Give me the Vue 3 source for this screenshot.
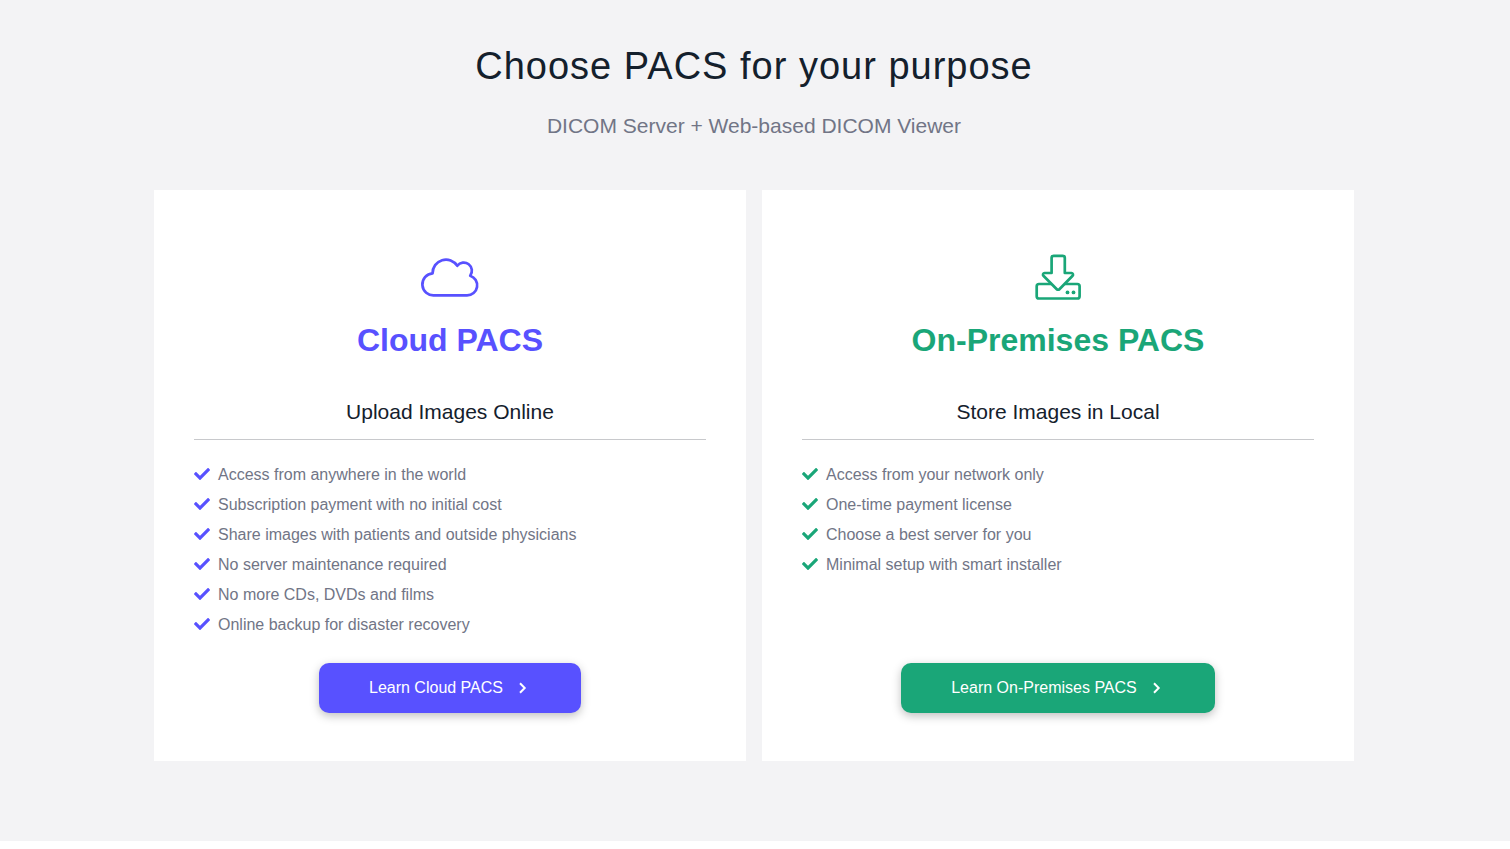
<script setup>
const plans = [
  {
    id: 'cloud',
    title: 'Cloud PACS',
    tagline: 'Upload Images Online',
    action: 'Learn Cloud PACS',
    features: [
      'Access from anywhere in the world',
      'Subscription payment with no initial cost',
      'Share images with patients and outside physicians',
      'No server maintenance required',
      'No more CDs, DVDs and films',
      'Online backup for disaster recovery',
    ],
  },
  {
    id: 'premises',
    title: 'On-Premises PACS',
    tagline: 'Store Images in Local',
    action: 'Learn On-Premises PACS',
    features: [
      'Access from your network only',
      'One-time payment license',
      'Choose a best server for you',
      'Minimal setup with smart installer',
    ],
  },
]
</script>

<template>
  <main class="section">
    <header class="intro">
      <h1>Choose PACS for your purpose</h1>
      <p>DICOM Server + Web-based DICOM Viewer</p>
    </header>

    <div class="plans">
      <article v-for="plan in plans" :key="plan.id" class="card" :class="plan.id">
        <svg v-if="plan.id === 'cloud'" class="hero" viewBox="0 0 64 64" aria-hidden="true">
          <path d="M16.300 50.400A10.900 10.900 0 0 1 14.600 28.300A13.400 13.400 0 0 1 39.300 20.800A7.800 7.800 0 0 1 52.200 30.700A10.100 10.100 0 0 1 49 50.400Z" />
        </svg>
        <svg v-else class="hero" viewBox="0 0 64 64" aria-hidden="true">
          <path d="M25.6 28V12.800a2 2 0 0 1 2-2h9.200a2 2 0 0 1 2 2V28h6.600a1.600 1.600 0 0 1 1.200 2.700L33.400 44.200a1.800 1.800 0 0 1-2.600 0L17.400 30.700a1.600 1.600 0 0 1 1.200-2.700z" />
          <path d="M25.500 39H13a2.300 2.300 0 0 0-2.300 2.300v9.900a2.300 2.300 0 0 0 2.300 2.300h38.300a2.300 2.300 0 0 0 2.300-2.300V41.300a2.300 2.300 0 0 0-2.300-2.300H38.700" />
          <circle class="dot" cx="41.500" cy="47.400" r="1.900" />
          <circle class="dot" cx="47.500" cy="47.400" r="1.900" />
        </svg>

        <h2>{{ plan.title }}</h2>
        <h3>{{ plan.tagline }}</h3>

        <ul>
          <li v-for="feature in plan.features" :key="feature">
            <svg class="check" viewBox="0 0 512 512" aria-hidden="true">
              <path d="M173.898 439.404l-166.4-166.4c-9.997-9.997-9.997-26.206 0-36.204l36.203-36.204c9.997-9.998 26.207-9.998 36.204 0L192 312.69 432.095 72.596c9.997-9.997 26.207-9.997 36.204 0l36.203 36.204c9.997 9.997 9.997 26.206 0 36.204l-294.4 294.401c-9.998 9.997-26.207 9.997-36.204-.001z" />
            </svg>
            {{ feature }}
          </li>
        </ul>

        <a class="action" href="#">
          {{ plan.action }}
          <svg class="chevron" viewBox="0 0 16 16" aria-hidden="true">
            <path d="M5 3.300L9.700 8 5 12.700" />
          </svg>
        </a>
      </article>
    </div>
  </main>
</template>

<style>
body {
  margin: 0;
  background: #fff;
}
</style>

<style scoped>
.section {
  padding: 42px 18px 80px 16px;
  background: #f3f3f5;
  color: #14202c;
  font-family: "Liberation Sans", Arial, sans-serif;
}

.intro {
  margin-bottom: 48px;
  text-align: center;
}

h1,
h2,
h3,
p,
ul {
  margin: 0;
  padding: 0;
}

h1 {
  margin-bottom: 20px;
  font-size: 38px;
  font-weight: 400;
  line-height: 48px;
  letter-spacing: 1px;
}

.intro p {
  color: #717586;
  font-size: 21px;
  line-height: 32px;
}

.plans {
  display: grid;
  grid-template-columns: repeat(auto-fit, minmax(400px, 1fr));
  gap: 16px;
  max-width: 1200px;
  margin: 0 auto;
}

.card {
  display: flex;
  flex-direction: column;
  align-items: center;
  padding: 55px 40px 48px;
  background: #fff;
}

.cloud {
  --accent: #5851ff;
}

.premises {
  --accent: #1aa678;
}

.hero {
  width: 64px;
  height: 64px;
  margin-bottom: 11px;
  fill: none;
  stroke: var(--accent);
  stroke-width: 2.7;
  stroke-linejoin: round;
}

.hero .dot {
  fill: var(--accent);
  stroke: none;
}

h2 {
  margin-bottom: 36px;
  color: var(--accent);
  font-size: 32px;
  font-weight: 700;
  line-height: 40px;
}

h3 {
  align-self: stretch;
  padding-bottom: 11px;
  border-bottom: 1px solid #c8c9cc;
  font-size: 21px;
  font-weight: 400;
  line-height: 32px;
  text-align: center;
}

ul {
  align-self: stretch;
  margin: 20px 0 23px;
  list-style: none;
}

li {
  display: flex;
  align-items: center;
  gap: 8px;
  color: #717586;
  font-size: 16px;
  line-height: 30px;
}

.check {
  flex: none;
  width: 16px;
  height: 16px;
  margin-bottom: 2px;
  fill: var(--accent);
}

.action {
  display: flex;
  align-items: center;
  gap: 12px;
  height: 50px;
  margin-top: auto;
  padding: 0 50px;
  border-radius: 10px;
  background: var(--accent);
  box-shadow: 0 3px 10px rgba(0, 0, 0, 0.25);
  color: #fff;
  font-size: 16px;
  text-decoration: none;
}

.chevron {
  width: 16px;
  height: 16px;
  fill: none;
  stroke: currentColor;
  stroke-width: 2;
}
</style>
